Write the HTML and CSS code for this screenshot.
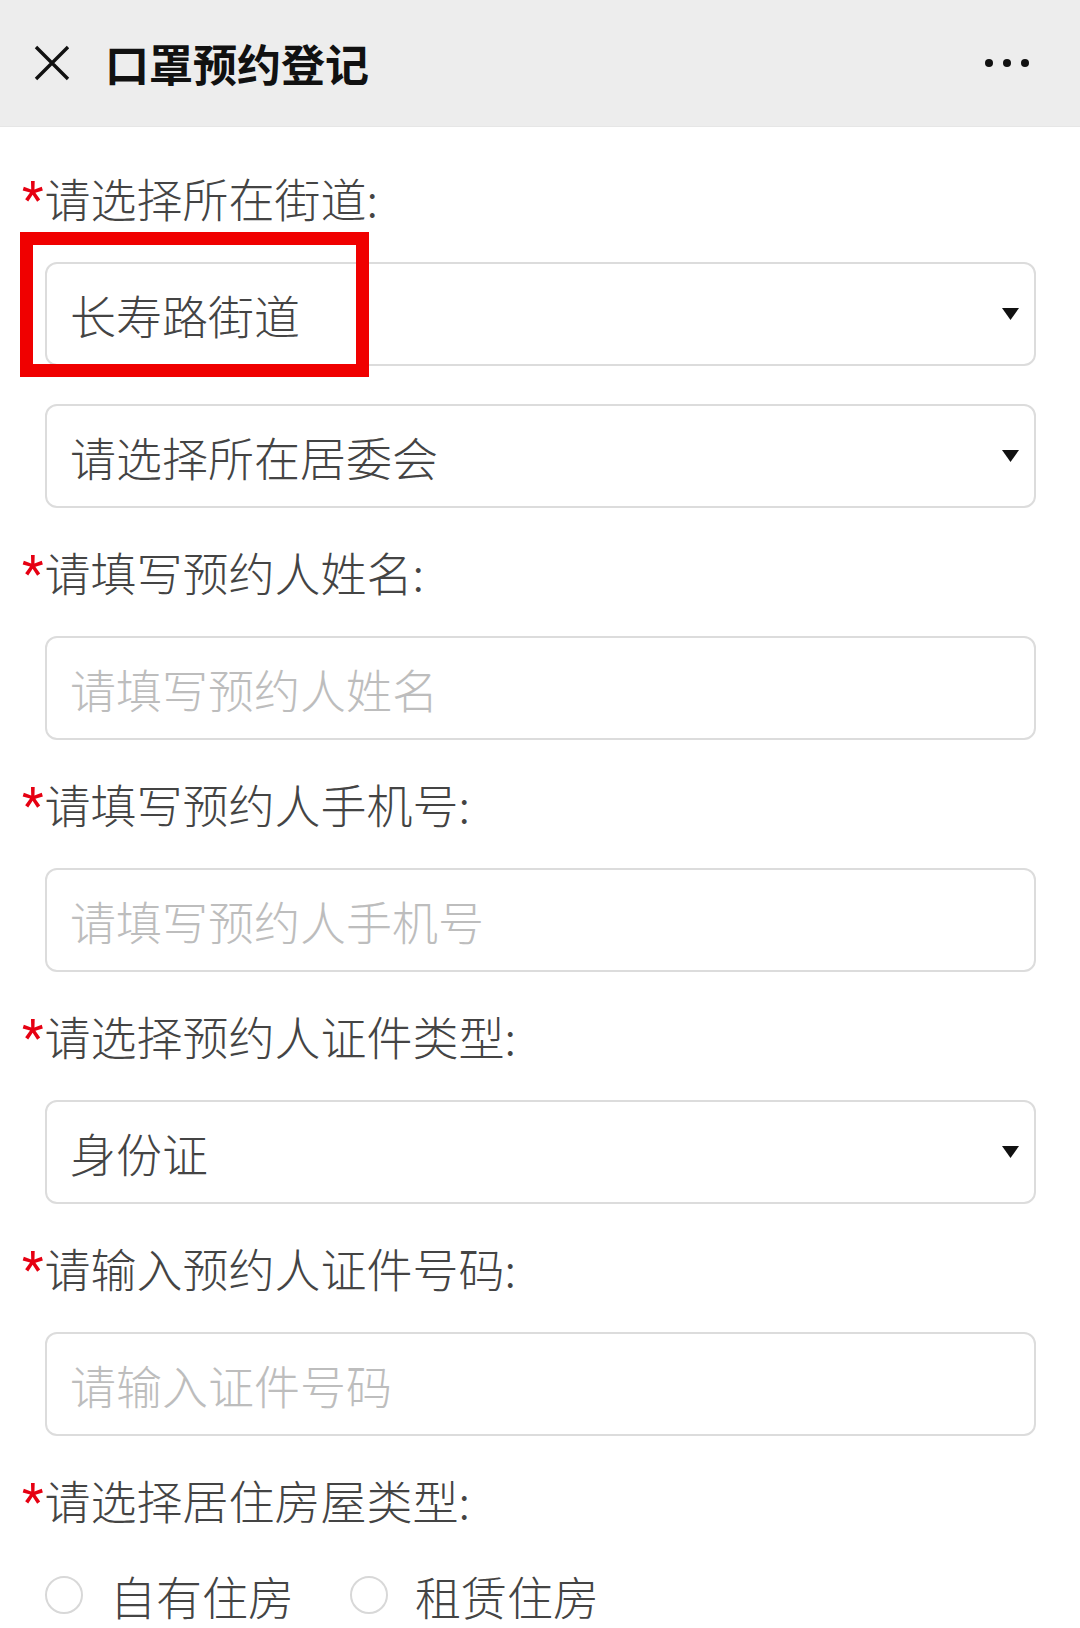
FILE: index.html
```html
<!DOCTYPE html>
<html lang="zh-CN">
<head>
<meta charset="utf-8">
<title>口罩预约登记</title>
<link rel="stylesheet" href="styles.css">
</head>
<body>
<header class="topbar">
  <svg class="close" width="36" height="36" viewBox="0 0 36 36" aria-hidden="true">
    <path d="M2 2 L34 34 M34 2 L2 34" stroke="#111" stroke-width="3.4" stroke-linecap="butt" fill="none"/>
  </svg>
  <h1 class="title">口罩预约登记</h1>
  <div class="more" aria-label="更多"><i></i><i></i><i></i></div>
</header>

<main class="form">
  <div class="field">
    <div class="label"><span class="req">*</span>请选择所在街道:</div>
    <div class="box select highlighted">
      <span class="value">长寿路街道</span>
      <svg class="arrow" width="17" height="12" viewBox="0 0 17 12"><path d="M0 0 H17 L8.5 12 Z" fill="#111"/></svg>
      <span class="mark"></span>
    </div>
    <div class="box select second">
      <span class="value">请选择所在居委会</span>
      <svg class="arrow" width="17" height="12" viewBox="0 0 17 12"><path d="M0 0 H17 L8.5 12 Z" fill="#111"/></svg>
    </div>
  </div>

  <div class="field">
    <div class="label"><span class="req">*</span>请填写预约人姓名:</div>
    <input class="box input" type="text" placeholder="请填写预约人姓名">
  </div>

  <div class="field">
    <div class="label"><span class="req">*</span>请填写预约人手机号:</div>
    <input class="box input" type="text" placeholder="请填写预约人手机号">
  </div>

  <div class="field">
    <div class="label"><span class="req">*</span>请选择预约人证件类型:</div>
    <div class="box select">
      <span class="value">身份证</span>
      <svg class="arrow" width="17" height="12" viewBox="0 0 17 12"><path d="M0 0 H17 L8.5 12 Z" fill="#111"/></svg>
    </div>
  </div>

  <div class="field">
    <div class="label"><span class="req">*</span>请输入预约人证件号码:</div>
    <input class="box input" type="text" placeholder="请输入证件号码">
  </div>

  <div class="field">
    <div class="label"><span class="req">*</span>请选择居住房屋类型:</div>
    <div class="radios">
      <label class="radio"><span class="circle"></span>自有住房</label>
      <label class="radio"><span class="circle"></span>租赁住房</label>
    </div>
  </div>
</main>
</body>
</html>
```

FILE: styles.css
```css
html, body {
  margin: 0;
  padding: 0;
  height: 1628px;
  overflow: hidden;
  background: #fff;
}

body {
  width: 1080px;
  font-family: "Noto Sans CJK SC", "Noto Sans", sans-serif;
  color: #555;
}

.topbar {
  height: 127px;
  box-sizing: border-box;
  background: #ededed;
  border-bottom: 1px solid #e6e6e6;
  display: flex;
  align-items: center;
  padding-left: 34px;
  padding-right: 51px;
}

.close {
  flex: none;
  display: block;
}

.title {
  margin: 0 0 0 35px;
  font-size: 44px;
  font-weight: 700;
  color: #111;
  line-height: 60px;
  flex: 1;
}

.more {
  display: flex;
  gap: 10px;
}

.more i {
  width: 8px;
  height: 8px;
  border-radius: 50%;
  background: #111;
  display: block;
}

.form {
  padding: 40px 44px 0 0;
}

.field {
  margin-bottom: 33px;
}

.label {
  height: 60px;
  font-size: 46px;
  font-weight: 300;
  line-height: 60px;
  color: #444;
  padding-left: 22px;
  margin-bottom: 35px;
  white-space: nowrap;
}

.req {
  font-family: Roboto, "Noto Sans", sans-serif;
  font-size: 50px;
  font-weight: 400;
  line-height: 0;
  color: #e60012;
  margin-right: 1px;
}

.box {
  display: flex;
  align-items: center;
  box-sizing: border-box;
  width: 991px;
  height: 104px;
  margin-left: 45px;
  border: 2px solid #dcdcdc;
  border-radius: 12px;
  background: #fff;
  padding: 0 15px 0 23px;
  font-family: "Noto Sans CJK SC", "Noto Sans", sans-serif;
  font-size: 46px;
  font-weight: 300;
  color: #444;
}

.select {
  position: relative;
  justify-content: space-between;
}

.select.second {
  margin-top: 38px;
}

.value {
  white-space: nowrap;
}

.arrow {
  flex: none;
  display: block;
}

.input {
  outline: none;
}

.input::placeholder {
  color: #bdbdbd;
}

.mark {
  position: absolute;
  left: -27px;
  top: -32px;
  width: 349px;
  height: 145px;
  box-sizing: border-box;
  border: 13px solid #f00000;
  pointer-events: none;
}

.radios {
  display: flex;
  align-items: center;
  padding-left: 45px;
  margin-top: 38px;
  gap: 56px;
}

.radio {
  display: flex;
  align-items: center;
  gap: 27px;
  font-size: 46px;
  font-weight: 300;
  line-height: 56px;
  color: #444;
}

.circle {
  width: 38px;
  height: 38px;
  box-sizing: border-box;
  border: 2px solid #d8d8d8;
  border-radius: 50%;
  display: block;
}
```
